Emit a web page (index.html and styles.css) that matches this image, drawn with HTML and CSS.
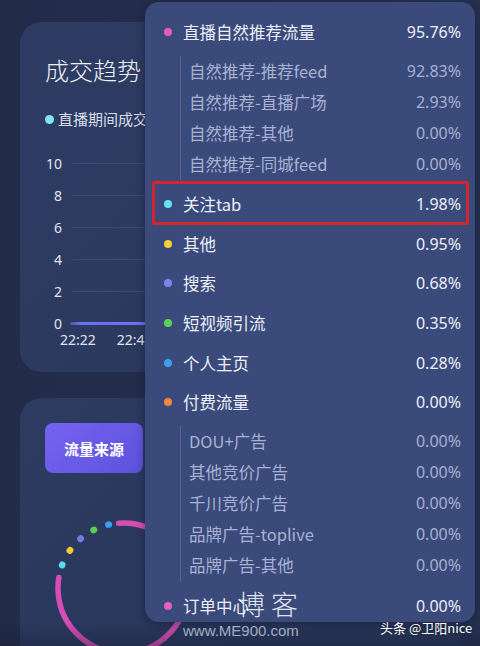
FILE: index.html
```html
<!DOCTYPE html>
<html lang="zh-CN">
<head>
<meta charset="utf-8">
<title>流量来源</title>
<link rel="stylesheet" href="styles.css">
</head>
<body>
<div class="page">
  <div class="cards">
    <section class="card trend">
      <h2 class="title">成交趋势</h2>
      <div class="legend"><span class="ldot"></span>直播期间成交金额</div>
      <div class="chart">
        <div class="yrow"><span class="ylab">10</span><span class="grid"></span></div>
        <div class="yrow"><span class="ylab">8</span><span class="grid"></span></div>
        <div class="yrow"><span class="ylab">6</span><span class="grid"></span></div>
        <div class="yrow"><span class="ylab">4</span><span class="grid"></span></div>
        <div class="yrow"><span class="ylab">2</span><span class="grid"></span></div>
        <div class="yrow"><span class="ylab">0</span><span class="axis"></span></div>
        <div class="xlabs"><span>22:22</span><span>22:42</span></div>
      </div>
    </section>
    <section class="card source">
      <div class="btn">流量来源</div>
      <svg class="donut" width="160" height="160" viewBox="0 0 160 160">
        <circle cx="80" cy="80" r="65" fill="none" stroke="#d64db6" stroke-width="5.5" stroke-linecap="round" stroke-dasharray="321 999" transform="rotate(266 80 80)"/>
        <circle cx="80" cy="80" r="65" fill="none" stroke="#5fd8f0" stroke-width="6.5" stroke-linecap="round" stroke-dasharray="0.6 999" transform="rotate(200.5 80 80)"/>
        <circle cx="80" cy="80" r="65" fill="none" stroke="#f2cb34" stroke-width="6.5" stroke-linecap="round" stroke-dasharray="0.6 999" transform="rotate(215 80 80)"/>
        <circle cx="80" cy="80" r="65" fill="none" stroke="#7379e6" stroke-width="6.5" stroke-linecap="round" stroke-dasharray="0.6 999" transform="rotate(229 80 80)"/>
        <circle cx="80" cy="80" r="65" fill="none" stroke="#5bcf55" stroke-width="6.5" stroke-linecap="round" stroke-dasharray="0.6 999" transform="rotate(243 80 80)"/>
        <circle cx="80" cy="80" r="65" fill="none" stroke="#3b9ef0" stroke-width="6.5" stroke-linecap="round" stroke-dasharray="0.6 999" transform="rotate(257 80 80)"/>
      </svg>
    </section>
  </div>

  <div class="tooltip">
    <div class="row"><span class="dot pink"></span><span class="label">直播自然推荐流量</span><span class="pct">95.76%</span></div>
    <div class="sub first">
      <div class="srow"><span class="label">自然推荐-推荐feed</span><span class="pct">92.83%</span></div>
      <div class="srow"><span class="label">自然推荐-直播广场</span><span class="pct">2.93%</span></div>
      <div class="srow"><span class="label">自然推荐-其他</span><span class="pct">0.00%</span></div>
      <div class="srow"><span class="label">自然推荐-同城feed</span><span class="pct">0.00%</span></div>
    </div>
    <div class="row marked"><span class="dot cyan"></span><span class="label">关注tab</span><span class="pct">1.98%</span></div>
    <div class="row"><span class="dot yellow"></span><span class="label">其他</span><span class="pct">0.95%</span></div>
    <div class="row"><span class="dot violet"></span><span class="label">搜索</span><span class="pct">0.68%</span></div>
    <div class="row"><span class="dot green"></span><span class="label">短视频引流</span><span class="pct">0.35%</span></div>
    <div class="row"><span class="dot blue"></span><span class="label">个人主页</span><span class="pct">0.28%</span></div>
    <div class="row"><span class="dot orange"></span><span class="label">付费流量</span><span class="pct">0.00%</span></div>
    <div class="sub second">
      <div class="srow"><span class="label">DOU+广告</span><span class="pct">0.00%</span></div>
      <div class="srow"><span class="label">其他竞价广告</span><span class="pct">0.00%</span></div>
      <div class="srow"><span class="label">千川竞价广告</span><span class="pct">0.00%</span></div>
      <div class="srow"><span class="label">品牌广告-toplive</span><span class="pct">0.00%</span></div>
      <div class="srow"><span class="label">品牌广告-其他</span><span class="pct">0.00%</span></div>
    </div>
    <div class="row"><span class="dot pink"></span><span class="label">订单中心</span><span class="pct">0.00%</span></div>
  </div>

  <div class="shade"></div>
  <div class="wm-title">博 客</div>
  <div class="wm-url">www.ME900.com</div>
  <div class="credit">头条 @卫阳nice</div>
</div>
</body>
</html>
```

FILE: styles.css
```css
* { box-sizing: border-box; }
html, body {
  margin: 0;
  padding: 0;
  background: #232d4b;
}
body {
  font-family: "Noto Sans CJK SC", "Noto Sans", sans-serif;
  color: #e9ecf8;
}
.page {
  position: relative;
  width: 480px;
  height: 646px;
  overflow: hidden;
  background: linear-gradient(90deg, #222b48 0%, #263152 100%);
}
.cards {
  display: flex;
  flex-direction: column;
  gap: 26px;
  padding: 22px 0 0 20px;
}
.card {
  width: 440px;
  border-radius: 22px;
  background: linear-gradient(135deg, #2e3c63 0%, #2a375c 100%);
  padding-left: 25px;
}
.trend {
  height: 350px;
  padding-top: 32px;
}
.title {
  margin: 0 0 23px 0;
  font-size: 24px;
  line-height: 32px;
  font-weight: 300;
  color: #eef0f8;
}
.legend {
  display: flex;
  align-items: center;
  gap: 4px;
  font-size: 15px;
  line-height: 20px;
  color: #d9ddec;
  margin-bottom: 18px;
}
.ldot {
  width: 9px;
  height: 9px;
  border-radius: 50%;
  background: #7fe3f5;
}
.chart {
  display: flex;
  flex-direction: column;
}
.yrow {
  display: flex;
  align-items: center;
  height: 32px;
  gap: 10px;
}
.ylab {
  width: 17px;
  text-align: right;
  font-family: "Noto Sans", sans-serif;
  font-size: 14px;
  color: #e0e4f2;
}
.grid {
  flex: 1;
  height: 1px;
  background: rgba(150, 165, 210, 0.18);
}
.axis {
  flex: 1;
  height: 3px;
  margin-left: -2px;
  border-radius: 2px 0 0 2px;
  background: linear-gradient(90deg, rgba(108,112,240,0.5) 0px, #6b70f0 10px, #6b70f0 100%);
}
.xlabs {
  display: flex;
  gap: 21px;
  padding-left: 15px;
  margin-top: -8px;
  font-family: "Noto Sans", sans-serif;
  font-size: 14px;
  line-height: 18px;
  color: #e0e4f2;
}
.source {
  height: 300px;
  padding-top: 25px;
  background: linear-gradient(135deg, #2d3b61 0%, #283559 100%);
}
.btn {
  width: 98px;
  height: 50px;
  border-radius: 8px;
  background: linear-gradient(135deg, #7563f2 0%, #5c52da 100%);
  display: flex;
  align-items: center;
  justify-content: center;
  font-size: 15px;
  font-weight: 700;
  color: #ffffff;
}
.donut {
  display: block;
  margin: 35px 0 0 -2px;
}

/* tooltip overlay */
.tooltip {
  position: absolute;
  left: 145px;
  top: 2px;
  width: 330px;
  height: 620px;
  border-radius: 14px;
  background: #3a4a7a;
  box-shadow: 0 2px 10px rgba(10, 15, 35, 0.45);
  padding: 10px 14px 0 19px;
}
.row {
  position: relative;
  display: flex;
  align-items: center;
  height: 39.6px;
  font-size: 16.5px;
  color: #eceff9;
}
.dot {
  width: 8px;
  height: 8px;
  border-radius: 50%;
  margin-right: 11px;
  flex: none;
}
.pink { background: #ea5cc4; }
.cyan { background: #62e2f6; }
.yellow { background: #f5cf3a; }
.violet { background: #7c83ef; }
.green { background: #5ad35c; }
.blue { background: #3d9df2; }
.orange { background: #f4883c; }
.label { flex: 1; white-space: nowrap; }
.pct {
  font-family: "Noto Sans", sans-serif;
  font-size: 16px;
}
.sub {
  margin-left: 16px;
  border-left: 1px solid #566593;
  padding-left: 8px;
}
.sub.first { margin-top: 4.3px; margin-bottom: 4.5px; }
.sub.second { margin-top: 3.9px; margin-bottom: 5.7px; }
.srow {
  display: flex;
  align-items: center;
  height: 31px;
  font-size: 16.5px;
  color: #a9b2d3;
}
.srow .pct { color: #a7b0d0; }
.marked::after {
  content: "";
  position: absolute;
  left: -12px;
  right: -8px;
  top: -3px;
  bottom: -1px;
  border: 3px solid #d2252e;
  border-radius: 2px;
}

/* watermarks */
.shade {
  position: absolute;
  left: 0;
  right: 0;
  bottom: 0;
  height: 24px;
  background: linear-gradient(180deg, rgba(20, 26, 46, 0) 0%, rgba(20, 26, 46, 0.35) 100%);
}
.wm-title {
  position: absolute;
  left: 238px;
  top: 587px;
  font-size: 27px;
  line-height: 34px;
  font-weight: 300;
  color: rgba(255, 255, 255, 0.85);
}
.wm-url {
  position: absolute;
  left: 183px;
  top: 621px;
  font-family: "Liberation Sans", sans-serif;
  font-size: 15px;
  line-height: 20px;
  color: rgba(220, 225, 240, 0.7);
}
.credit {
  position: absolute;
  left: 380px;
  top: 618px;
  font-size: 13px;
  line-height: 20px;
  color: #ffffff;
  text-shadow: 0 0 2px rgba(0, 0, 0, 0.5);
}
```
